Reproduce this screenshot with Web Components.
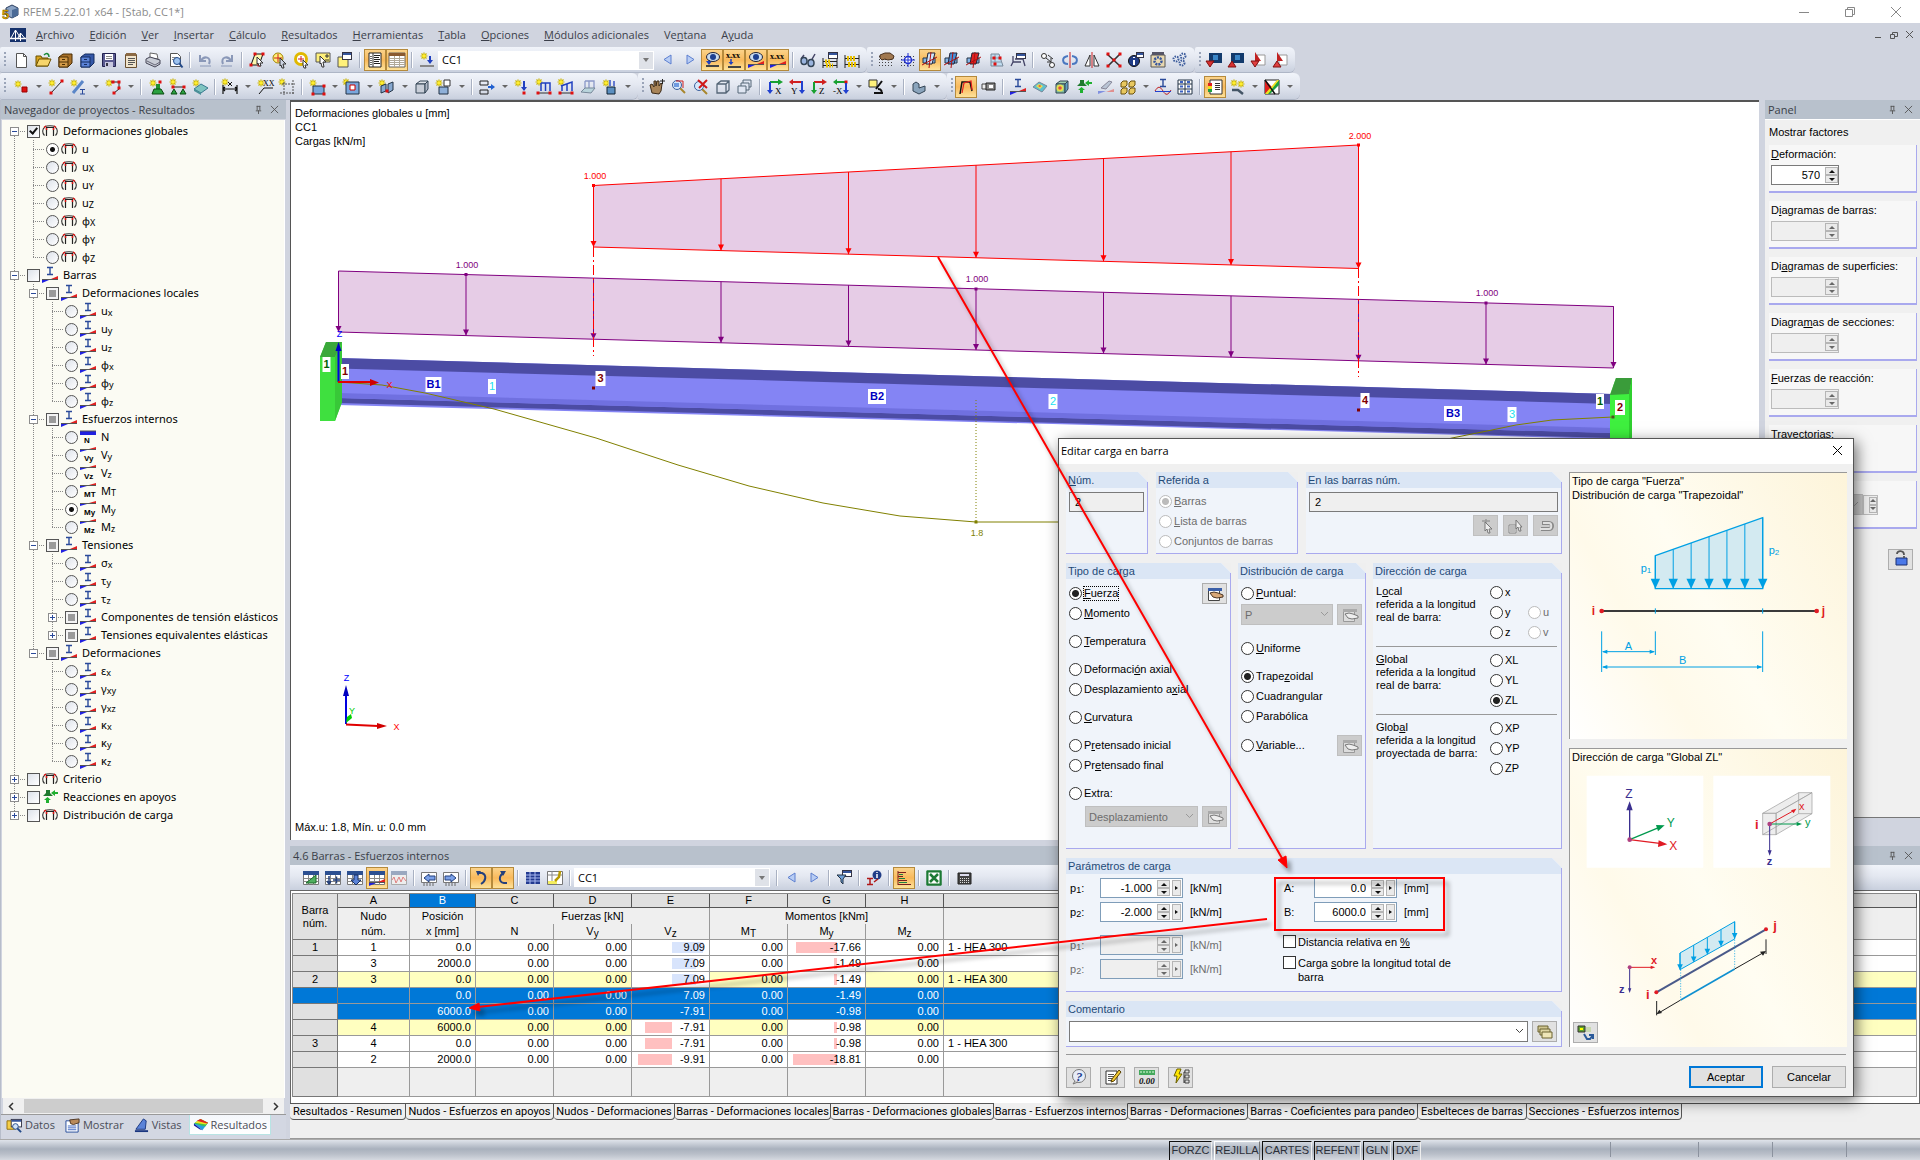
<!DOCTYPE html>
<html lang="es">
<head>
<meta charset="utf-8">
<title>RFEM 5.22.01 x64 - [Stab, CC1*]</title>
<style>
html,body{margin:0;height:100%;overflow:hidden}
body{font:11px/14px "Liberation Sans",Arial,sans-serif;color:#000;background:#d0d4df}
</style>
</head>
<body>
<rf-app></rf-app>
<script>
/* ---------- icon drawings, 16 x 16 grid ---------- */
const star=(x,y)=>`<path d="M${x} ${y-3.5}v7M${x-3.5} ${y}h7M${x-2.5} ${y-2.5}l5 5M${x+2.5} ${y-2.5}l-5 5" stroke="#c9b400" stroke-width="1.2"/><circle cx="${x}" cy="${y}" r="1.8" fill="#ffee30"/>`;
const red=(x,y)=>`<rect x="${x-1.5}" y="${y-1.5}" width="3" height="3" fill="#e01010"/>`;
const line=(d,c,w=1)=>`<path d="${d}" fill="none" stroke="${c}" stroke-width="${w}"/>`;
const fill=(d,c,s='none')=>`<path d="${d}" fill="${c}" stroke="${s}"/>`;
const lens=(x,y,r=4.5)=>`<path d="M${x+3} ${y+3}l5 5" stroke="#a8862c" stroke-width="2"/><circle cx="${x}" cy="${y}" r="${r}" fill="#d8e8fa" stroke="#3a5f9c"/>`;
const beamDiag=fill('M0 16v-3h7z','#2020e0')+fill('M16 9v3H9z','#e02020')+line('M0 12.5h16','#555');
const iMark=(x,y)=>line(`M${x-3} ${y+.5}h6M${x} ${y}v7M${x-3} ${y+7.5}h6`,'#2a4a9a',1.4);
const win=(x,y,w,h)=>`<rect x="${x+.5}" y="${y+.5}" width="${w}" height="${h}" fill="#fff" stroke="#334"/><rect x="${x+1}" y="${y+1}" width="${w-1}" height="2" fill="#35559c"/>`;
const cube=(c1,c2,c3)=>fill('M2 5l4-3h8l-3 3z',c1,'#345')+fill('M2 5h9v9H2z',c2,'#345')+fill('M11 5l3-3v8l-3 4z',c3,'#345');
const grid=line('M1.5 4v11M4.5 4v11M7.5 4v11M10.5 4v11M13.5 4v11','#444').replace('/>',' stroke-dasharray="1 2"/>');
const sheet=`<path d="M.5 1.5h15v13H.5z" fill="#fff" stroke="#777"/><path d="M0 1h16v4H0z" fill="#2b4f91"/><path d="M.5 8.5h15M.5 11.5h15M5.5 5v10M10.5 5v10" stroke="#888"/>`;
const hand=fill('M2 3l5-2h5l4 3-1 3-5 1-3-1-3 1-2-2z','#a07850','#4b3320');
const axisPlanes=(c)=>fill('M1 6h12v5H1z','#86b6e8','#234')+fill('M6 1h7l-3 11H4z',c,'#223')+line('M0 13l15-8M9 0L7 16','#b01010');
const cubeSm=(x,y)=>fill(`M${x} ${y+2}l2-2h4v4l-2 2h-4z`,'#e8c860','#6b5210');
const ICONS={
 app:fill('M4 4l6-3 6 3v7l-6 3-6-3z','#8aa3c4','#2b3f60')+fill('M10 6l6-2v7l-6 3z','#4a6a96')+`<text x="0" y="15" font-size="13" font-weight="bold" fill="#f0b400" stroke="#5a4200" stroke-width=".5" font-family="Liberation Sans,sans-serif">5</text>`,
 bridge:`<rect y="1" width="16" height="14" fill="#15316b"/>`+line('M0 11.5h16','#fff',1.5)+line('M5.5 3v11M5.500 3L1 11M5.500 3l5 8M10.500 6v8M10.500 6L8 11M10.500 6l4 5','#fff'),
 'new':fill('M3.5 1.5h7l3 3v11h-10z','#fff','#555')+line('M10.5 1.5v3h3','#555'),
 open:fill('M1 14V4h5l1 2h6v8z','#d9a520','#6b5000')+fill('M1 14l3-7h12l-3 7z','#f7d56b','#6b5000')+line('M9 3c3-3 5-1 5 2','#1a8a3a',1.5),
 box:fill('M2 5l4-3h9v9l-4 4H2z','#a8712a','#4b2e05')+fill('M2 5h9v10H2z','#d29a48','#4b2e05')+line('M2 10h9M5 7.5h3M5 12.5h3','#4b2e05'),
 boxb:fill('M2 5l4-3h9v9l-4 4H2z','#3558a8','#152c60')+fill('M2 5h9v10H2z','#5b83d8','#152c60')+line('M2 10h9M5 7.5h3M5 12.5h3','#152c60'),
 save:fill('M1.5 1.5h13v13h-13z','#5a5a90','#222250')+fill('M4 2h8v6H4z','#fff')+fill('M4 10h8v5H4z','#c8c8e0')+line('M5 4.5h6M5 6.500h6','#888')+fill('M5 11h2v3H5z','#334'),
 clip:fill('M2.5 2.5h11v13h-11z','#f0e4cc','#6b5030')+line('M5 6.5h7M5 8.5h7M5 10.5h7M5 12.5h5','#555')+fill('M3 1h10v3H3z','#8c6a45'),
 print:fill('M5 1l7 1 1 5-8-1z','#fff','#666')+fill('M1 7l4-2 10 3v4l-5 3-9-4z','#c9cdd6','#445')+line('M2 9l8 4 5-3','#667'),
 preview:fill('M3.5 1.5h7l3 3v10h-10z','#fff','#555')+line('M5 5.5h5M5 7.5h3','#888')+`<circle cx="10" cy="9" r="3.5" fill="#9ec3ef" stroke="#234a8a"/><path d="M12.500 11.500l3 4" stroke="#234a8a" stroke-width="2"/>`,
 undo:line('M3 3v6h6M4 9c3-6 11-4 8 3','#8a98b8',2)+line('M3 14h11','#8a98b8'),
 redo:line('M13 3v6H7M12 9C9 3 1 5 4 12','#8a98b8',2)+line('M2 14h11','#8a98b8'),
 plane:fill('M6 2h8l-4 11H2z','#fff9b0','#111')+red(6,2)+red(2,13)+red(14,2)+red(10,13)+fill('M8 5l6 6h-3l1 3-2 0-1-3-1 1z','#fff','#333'),
 zoomy:`<circle cx="7" cy="6" r="5" fill="#fff27a" stroke="#a08000"/>`+line('M7 2v8M3 6h8','#d02020')+fill('M9 6l6 6-3 0 1 4-2 0-1-3-1 1z','#ccd4e4','#333'),
 zoomr:`<circle cx="8" cy="7" r="5.5" fill="#fff" stroke="#e0b800" stroke-width="3"/>`+line('M5 7h6M8 4v6','#d02020')+fill('M10 8l5 5-3 0 1 3-2 0-1-3z','#fff','#333'),
 selpm:fill('M1 1h14v9H1z','#fff17a','#555')+line('M10 4h4M12 2v4M10 8h4','#333')+fill('M5 4l6 6-3 0 1 5-2 0-1-4-1 1z','#fff','#333'),
 win:fill('M1 5h10v10H1z','#fff17a','#555')+win(5,0,9,7),
 list:fill('M2 1h12v14H2z','#fff','#222')+line('M6 1v14','#333')+line('M3 4.500h2M3 6.500h2M3 8.500h2M3 10.500h2M3 12.500h2','#666')+line('M7 3.500h6M7 5.500h5M7 7.500h6M7 9.500h5M7 11.500h6','#222'),
 tbl:fill('M0 1h16v14H0z','#fff','#666')+fill('M0 1h16v3H0z','#8a5a30')+line('M0 6.500h16M0 8.500h16M0 10.500h16M0 12.500h16M5.500 4v11M10.500 4v11','#b0a898'),
 ldnew:star(5,4)+line('M11 4v6','#2040c0',2)+fill('M8 8h6l-3 4z','#2040c0')+fill('M1 13h14v2H1z','#888'),
 prev:fill('M11 3v9L4 7.500z','#b8cdf4','#5c7fd0'),
 next:fill('M5 3v9l7-4.500z','#b8cdf4','#5c7fd0'),
 eyeload:line('M5 4v7','#2040c0',2)+fill('M2 9h6l-3 4z','#2040c0')+`<ellipse cx="9" cy="5" rx="6.500" ry="4.500" fill="#cde" stroke="#223"/><circle cx="9" cy="5" r="3" fill="#1d3f90"/>`+fill('M2 13h13v2H2z','#444'),
 xxxload:`<text x="0" y="6" font-size="8" font-weight="bold" font-family="Liberation Serif,serif">x.xx</text>`+line('M5 7v5','#2040c0',1.5)+fill('M2.500 10h5l-2.500 3z','#2040c0')+fill('M2 14h13v2H2z','#444'),
 eyebeam:`<ellipse cx="8" cy="5" rx="6.500" ry="4.500" fill="#cde" stroke="#223"/><circle cx="8" cy="5" r="3" fill="#1d3f90"/>`+beamDiag,
 xxxbeam:`<text x="0" y="7" font-size="8" font-weight="bold" font-family="Liberation Serif,serif">x.xx</text>`+beamDiag,
 glasses:line('M1 7l3-4M11 9l4-7','#446',1.5)+`<ellipse cx="4" cy="9" rx="3" ry="3.500" fill="#9ab4dd" stroke="#345" stroke-width="1.500"/><ellipse cx="11" cy="11" rx="3" ry="3.500" fill="#9ab4dd" stroke="#345" stroke-width="1.500"/>`,
 calcwin:win(6,0,9,6)+line('M1 6v10M15 7v9M1 9.500h14M1 13.500h14','#222')+line('M3 9.500h5M4 13.500h7','#e8c000',4).replace('/>',' stroke-dasharray="2 1"/>'),
 abacus:line('M1 3v13M15 3v13M1 6.500h14M1 12.500h14','#222')+line('M3 6.500h9M4 12.500h8','#e8c000',5).replace('/>',' stroke-dasharray="2 1"/>'),
 handgrid:grid+hand,
 gridsnap:grid+`<circle cx="8" cy="8" r="3.500" fill="#fff" stroke="#2030d0" stroke-width="1.500"/>`+line('M8 1v14M1 8h14','#2030d0'),
 ax1:axisPlanes('#cfe4fa'),ax2:axisPlanes('#4a90d8'),ax3:axisPlanes('#e02020'),
 gridsurf:fill('M3 2h8l4 12H3z','#c0dcf0','#789')+line('M2 6h11M3 10h11M7 2v12','#89a')+red(6,6)+red(12,6)+red(7,12),
 hook:win(6,1,9,5)+line('M3 4v6l-2 4M5 7h8l2 7M3 10h8','#446',1.3),
 copy:`<circle cx="4" cy="4" r="2.500" fill="#fff" stroke="#333"/><circle cx="12" cy="13" r="2.500" fill="#fff" stroke="#333"/>`+line('M6 6l5 4M11 6v4H7M8 3l5 4','#333'),
 rot:line('M8 0v16','#d02020')+line('M6 4C-1 5 0 12 6 12M10 4c7 1 6 8 0 8','#4a78c0',2),
 mirror:line('M8 0v16','#d02020')+fill('M6 3v11H1z','#fff','#333')+fill('M10 3v11h5z','#fff','#333'),
 cross:line('M1 2l13 12M14 2L2 14','#333',1.6)+red(8,8)+red(2,2)+red(14,2)+red(2,14)+red(14,14),
 info:`<circle cx="6" cy="9" r="5.500" fill="#203c86" stroke="#111"/><path d="M6 5v1M6 8v5" stroke="#fff" stroke-width="2"/>`+win(8,0,7,5),
 gear:fill('M1 3h14v12H1z','#e8d8b0','#555')+fill('M2 0h12v3H2z','#556')+`<circle cx="8" cy="9" r="3.500" fill="none" stroke="#35559c" stroke-width="2.500" stroke-dasharray="2 1"/>`,
 gears:`<g fill="none" stroke="#3c5c9c" stroke-width="2" stroke-dasharray="1.500 1"><circle cx="4" cy="7" r="2.500"/><circle cx="11" cy="4" r="2.500"/><circle cx="10" cy="11" r="2.500"/></g>`,
 dlS:fill('M3 1h13v10H3z','#123a6c')+fill('M7 3h5v5H7z','#3a86c8')+fill('M0 9h8l-4 6z','#d83030','#801010'),
 dlU:fill('M3 1h13v10H3z','#123a6c')+fill('M7 3h5v5H7z','#3a86c8')+fill('M0 15h8l-4-6z','#d83030','#801010'),
 redA:fill('M7 3h8v10H7z','#fff','#999')+fill('M5 0l6 9H5z','#c02020')+fill('M1 9h8l-4 6z','#e04040','#801010'),
 redB:fill('M7 3h8v10H7z','#fff','#999')+fill('M5 0l6 9H5z','#c02020')+fill('M1 15h8l-4-6z','#e04040','#801010'),
 node:star(5,5)+fill('M9 8h5v5H9z','#e01010','#900'),
 line:star(4,4)+line('M3 14L14 2','#222')+red(3,14)+red(14,2),
 beam:star(4,4)+line('M3 14L13 2','#5a86c8',3)+line('M10 10.500h5M12.500 10v5M10 15h5','#2a4a9a'),
 poly:star(4,4)+line('M6 3h8v7l-5 4','#222')+red(8,3)+red(14,3)+red(14,9)+red(9,14),
 support:star(5,4)+fill('M8 5h4v5H8z','#209030')+fill('M4 15l2-5h7l3 5z','#2aa040','#0a4a10')+red(12,3),
 supp2:star(3,3)+line('M2 8h13','#222')+red(3,8)+red(14,8)+fill('M1 15l3-5 3 5zM10 15l3-5 3 5z','#2aa040','#0a4a10'),
 surf:star(4,4)+fill('M2 10l7-5 7 4-7 5z','#7fc4c0','#3a7a90')+fill('M2 10v2l7 4v-2z','#4a9098'),
 dim:star(3,3)+line('M1 6v9M15 6v9M1 10h14M3 8l-2 2 2 2M13 8l2 2-2 2','#111',1.2)+line('M6 3l4 4M10 3l-4 4','#111'),
 coord:star(4,4)+line('M2 15l5-6h9','#111')+`<text x="6" y="7" font-size="8" font-family="Liberation Serif,serif">XX</text>`,
 dimbox:star(3,3)+line('M5 3v13M14 1v15M3 5h13M1 14h15','#555').replace('/>',' stroke-dasharray="2 1"/>'),
 sq:star(4,4)+fill('M4 7h11v8H4z','#7aa7dc','#234')+red(4,15)+red(15,15)+red(15,7),
 sqop:star(2,3)+fill('M2 3h13v12H2z','#7aa7dc','#234')+fill('M6 6h5v5H6z','#fff','#c00'),
 solid:star(3,4)+fill('M2 7l5-2v7l-5 2zM9 5l5-2v8l-5 3z','#86a8d0','#234')+red(8,12),
 cubeg:cube('#e0e4ea','#c8ced8','#b0b8c6'),
 cube2:star(3,4)+fill('M3 8h9v7H3z','#8fb0d8','#234')+fill('M8 1h6v6H8z','#fff','#333'),
 release:line('M1 2h8v4H1zM1 11h8v4H1z','#222')+line('M9 8h5','#2060d0',2)+fill('M12 5l4 3-4 3z','#2060d0'),
 arrowpt:star(4,4)+line('M10 2v9','#2040c0',2)+fill('M7 8h6l-3 4z','#2040c0')+red(10,14),
 ldbeam:star(3,3)+line('M5 4h9v8M9.500 4v8M5 4v8','#2040c0',1.5)+line('M1 14h14','#333')+red(2,14)+red(14,14),
 ldbeam2:star(3,3)+line('M3 7l11-4v9M9 5v7M4 7v5','#2040c0',1.5)+line('M1 14h14','#333')+red(2,14)+red(14,14),
 ldsurf:line('M5 2h9v8M9 2v8M5 2v8','#8a98c8',1.3)+fill('M1 13l4-4h10l-4 5z','#b9d4dc','#789'),
 ldcube:star(4,4)+line('M8 1v6M12 2v5','#2040c0',1.3)+fill('M5 8h8v7H5z','#5b8fc0','#123'),
 handzoom:fill('M3 14L1 6l2-1 2 3V2h2v5l1-5h2v5l2-3 1 1-1 7-2 3z','#a88458','#3b2a18')+line('M11 2h5M13.500 0v5','#222'),
 zoomrect:lens(6,6)+line('M5 2h7v7','#d02020')+fill('M3 4h5v4H3z','#6f9be0'),
 zoomx:lens(6,7)+line('M5 1l9 8M14 1L6 9','#d01818',2),
 box3:line('M2 5l4-3h8v9l-3 3H2zM2 5h9v9M11 5l3-3','#567',1.3),
 boxes:fill('M6 1h8v7H6z','#dfe6f2','#567')+fill('M4 4h8v7H4z','#dfe6f2','#567')+fill('M1 7h8v7H1z','#dfe6f2','#567'),
 vx:line('M3 3h10','#18a030',2)+fill('M11 0l5 3-5 3z','#18a030')+line('M3 3v10','#2040d0',2)+fill('M0 11h6l-3 4z','#2040d0')+`<text x="8" y="15" font-size="9" font-family="Liberation Serif,serif">X</text>`,
 vy:line('M3 3h9','#d02020',2)+fill('M4 0L0 3l4 3z','#d02020')+line('M13 2v11','#2040d0',2)+fill('M10 11h6l-3 4z','#2040d0')+`<text x="2" y="15" font-size="9" font-family="Liberation Serif,serif">Y</text>`,
 vz:line('M3 3h10','#d02020',2)+fill('M11 0l5 3-5 3z','#d02020')+line('M3 3v10','#18a030',2)+fill('M0 11h6l-3 4z','#18a030')+`<text x="8" y="15" font-size="9" font-family="Liberation Serif,serif">Z</text>`,
 vmx:line('M3 3h9','#18a030',2)+fill('M4 0L0 3l4 3z','#18a030')+red(13,3)+line('M13 4v9','#2040d0',2)+fill('M10 11h6l-3 4z','#2040d0')+`<text x="0" y="15" font-size="9" font-family="Liberation Serif,serif">-X</text>`,
 micro:fill('M1 1h8v7H1z','#fff17a','#333')+line('M14 2L8 10M6 14h9M10 10c4 0 4 3 3 4','#111',2),
 solid2:fill('M2 5l3-2 3 2v4l6-2v5l-6 3-6-3z','#8aa4bc','#345'),
 frame:line('M2 15L4 3h8l2 9','#111',1.5)+line('M4 14L6 4l7-2 1 9','#e02020',1.2),
 usb:fill('M2 5h7v5H2z','#eee','#444')+fill('M6 4h9v7H6z','#888','#222')+fill('M9 6h4v3H9z','#fff'),
 ibeam:iMark(8,0)+beamDiag,
 grad:fill('M1 8l6-5 8 4-5 6z','#60c0d0','#789')+fill('M4 7l3-2 4 2-3 3z','#e8e050')+fill('M6 7l2-1 1 1-1 1z','#e04040'),
 gradcube:cube('#a0d0b0','#80c0a0','#60a0c0')+`<circle cx="6" cy="9" r="3.500" fill="#e8e050"/><circle cx="6" cy="9" r="1.800" fill="#e05040"/>`,
 supgreen:fill('M4 1h4v3l3 3H1l3-3z','#1f7a2e')+fill('M16 3h-3V1l-4 3 4 3V5h3zM4 14v-3H2l3.500-3L9 11H7v3z','#20b030'),
 shade:fill('M3 9l8-7 3 1-6 7z','#b8c4d4','#889')+fill('M0 15v-3h8z','#8090e0')+fill('M16 10v3H8z','#e09090'),
 cubes4:cubeSm(1,2)+cubeSm(9,2)+cubeSm(1,9)+cubeSm(9,9),
 iwave:iMark(8,0)+line('M0 12c3-5 5-5 8 0s5 4 8-1','#c02020')+line('M0 12.500h16','#2040d0'),
 tbeam:fill('M1 1h14v14H1z','#fff','#234')+line('M1 5h14M1 10h14M8 1v14','#234')+line('M3 3h3M10 3h3M3 7.500h3M10 7.500h3M3 12.500h3M10 12.500h3','#3a60c0',2),
 legend:fill('M3 1h12v14H3z','#fff','#333')+line('M8 4.500h5M8 6.500h5M8 8.500h5M8 10.500h5','#333')+fill('M1 4h4v3H1z','#e02020')+fill('M1 7h4v3H1z','#f0e020')+fill('M1 10h4v3H1z','#20a040'),
 wand:star(5,4)+star(12,5)+line('M3 11h6l5 4','#456',2.500),
 palette:fill('M1 1h14v14H1z','#fff','#222')+fill('M1 1l7 7-7 7z','#e02020')+fill('M1 15L15 1v5l-9 9z','#20a040')+fill('M1 15L13 1h2L4 15z','#f0e020')+line('M1 1l10 14','#111',1.500),
 tri:sheet+fill('M3 13L13 5v8z','#50b060','#1a6a2a'),
 tplus:sheet+line('M4 6v7M2 11l2 3 2-3M8 10h7M11.500 6.500v7','#24407c',1.500),
 tdown:sheet+fill('M7 5h4v5h3l-5 5-5-5h3z','#5b83d8','#152c60'),
 tbeamd:sheet+beamDiag,
 twave:fill('M.5 1.500h15v13H.5z','#eee','#aaa')+fill('M0 1h16v4H0z','#9aa8c0')+line('M1 10l2-3 2 6 3-6 2 5 2-5 3 4','#e08080'),
 tleft:fill('M.5 2.500h15v10H.5z','#fff','#777')+line('M3 13v3M6 13v3M9 13v3M12 13v3','#666')+fill('M8 4v2h6v4H8v2L3 8z','#7aa0e8','#24407c'),
 tright:fill('M.5 2.500h15v10H.5z','#fff','#777')+line('M3 13v3M6 13v3M9 13v3M12 13v3','#666')+fill('M8 4v2H2v4h6v2l5-4z','#7aa0e8','#24407c'),
 curR:line('M4 3h5c5 2 4 8-1 11','#24407c',2)+fill('M3 1h5L5 6z','#24407c'),
 curL:line('M12 13H9C3 12 4 5 9 3','#24407c',2)+fill('M5 1h6l-3 5z','#24407c'),
 tgrid:fill('M1 2h14v12H1z','#223a90')+line('M1 5h14M1 8h14M1 11h14M5 2v12M10 2v12','#a8b8f0'),
 ttool:fill('M.5 1.500h15v13H.5z','#fff','#777')+line('M.5 5h15M5 1v13','#888')+fill('M1 11h9v3H1z','#f4ee60')+line('M13 1l-1 6-4 4','#b89a00',2.500),
 funnel:win(6,0,9,6)+fill('M1 5h9L7 9v5l-2-2V9z','#6fa0d8','#234'),
 infoI:`<circle cx="11" cy="5" r="4.500" fill="#203c86"/><path d="M11 2v1M11 4v4" stroke="#fff" stroke-width="1.500"/>`+line('M1 8.500h6M4 8v6M1 14.500h6M8 12l4-3','#b01818',1.500),
 bars:line('M2 1v14M2 2.500h8M2 6.500h5M2 10.500h9M2 14.500h13','#7a2020',1)+line('M3 4.500h4M3 8.500h6M3 12.500h8','#208040'),
 excel:fill('M1 1h14v14H1z','#fff','#1d7a34')+line('M1.500 1.500h13v13h-13z','#1d7a34',2)+line('M4 4l8 8M12 4l-8 8','#1d7a34',2.500),
 calc:fill('M2 3h13v11H2z','#444','#222')+fill('M4 4h9v2H4z','#dde')+line('M4 8.500h10M4 10.500h10M4 12.500h10','#ddd').replace('/>',' stroke-dasharray="1 1"/>'),
 arc:line('M4.500 13V4.500h7V13','#222',1.2)+line('M3 4C0 6 0 10 2.500 12.500M13 4c3 2 3 6 .5 8.500M3 3.500c2-1 8-1 10 0','#333',1.1)+line('M2 4.500l2-1.500M14 4.500L12 3M4.500 5v2M11.500 5v2','#e01010',1.5),
 nN:line('M0 4h16','#2020e0',4)+line('M0 2h16','#555'),
 flat:fill('M0 5V3h7z','#2020e0')+fill('M16 0v2H9z','#e02020')+line('M0 2.500h16','#555'),
 datos:fill('M0 3h9v9H0z','#f5cf48','#94700c')+win(4,1,11,8)+`<circle cx="9" cy="9" r="3" fill="#cfe3fa" stroke="#234a8a"/><path d="M11 11l4 4" stroke="#234a8a" stroke-width="2"/>`,
 mostrar:fill('M1 3h13v12H1z','#fff','#234a9a')+line('M3 8.500h9M3 10.500h9M3 12.500h9','#3b64c0')+fill('M5 2l10-1v4L9 7 6 6z','#b98a5a','#4b3320'),
 vistas:fill('M10 1l3 2-1 9H2z','#5b83d8','#1a3680')+line('M1 14h14','#1a3680',2),
 result:fill('M1 7l7-5 8 4-6 8z','#2aa0e0')+fill('M1 7l7-5 8 4-3 4z','#40c050')+fill('M2 6l6-4 8 4-2 2z','#f0e020')+fill('M4 4l4-2 8 4-1 1z','#e02020')+fill('M1 7l9 7-3-1-6-4z','#1018a0'),
 cursor:line('M4 3h8M8 1v5','#9a9a9a',1.500)+fill('M7 4l7 7-3 0 1 4-2 0-1-4-2 2z','#eee','#777'),
 cursorl:fill('M1 7h7v8H1z','#eee','#888')+line('M2 9h5M2 11h5M2 13h5','#888')+fill('M8 2l6 7-2 0 1 4-2 0-1-4-2 2z','#eee','#777'),
 back:line('M3 11h8c4 0 4-6 0-6H4','#888',4)+line('M2 11h9c3 0 3-6 0-6H5','#e0e0e0',2),
 edit:fill('M1.500 2.500h11v12h-11z','#fff','#444')+fill('M1 2h14v3H1z','#3b5fa8')+fill('M3 7l4-1 4 1 5 2v2l-6 1-4-1z','#d8a878','#4b3320'),
 editg:fill('M1.500 2.500h11v12h-11z','#ddd','#999')+fill('M1 2h14v3H1z','#aaa')+fill('M3 7l4-1 4 1 5 2v2l-6 1-4-1z','#eee','#777'),
 stack:fill('M1 2h10v6H1z','#cfc590','#6b6230')+fill('M3 5h10v6H3z','#dfd6a4','#6b6230')+fill('M5 8h10v6H5z','#efe6b8','#6b6230'),
 help:`<circle cx="8" cy="7" r="6.500" fill="#e6ecf8" stroke="#777"/><path d="M4 12l-2 3 5-2" fill="#ddd" stroke="#777"/><text x="5" y="12" font-size="13" font-style="italic" font-weight="bold" fill="#1d3f90" font-family="Liberation Serif,serif">?</text>`,
 note:fill('M1 2h11v13H1z','#fff','#333')+line('M3 5.500h6M3 7.500h6M3 9.500h4M3 11.500h4','#555')+fill('M14 1l2 2-7 9-3 1 1-3z','#f2c832','#5a4200'),
 units:fill('M0 1h16v5H0z','#44a85c')+line('M2 2v2M5 2v2M8 2v2M11 2v2M14 2v2','#dfd')+`<text x="0" y="15" font-size="9" font-style="italic" font-weight="bold" fill="#111" font-family="Liberation Serif,serif">0.00</text>`,
 bolt:fill('M4 0h4L6 5h3l-6 9 1-7H1z','#ffe600','#6b6000')+line('M11 3v11M11 3h2M11 8h2M11 13h2','#333')+fill('M12 1h4v3h-4zM12 6h4v3h-4zM12 11h4v3h-4z','#ddd','#444'),
 lock:fill('M3 8h11v7H3z','#4a78e8','#1a2f70')+line('M11 8V6M4 4c0-4 7-4 7 1','#555',1.800),
 render:fill('M0 1h7v6H0z','#60a030','#333')+fill('M2 3h3v2H2z','#ff0')+fill('M8 2h5v5H8z','#c8d8b0')+line('M6 9l3 5h3l3-4M11 10h4v4','#2a5a9a',2)
};
/* ---------- helpers ---------- */
const define=(tag,make)=>customElements.define(tag,class extends HTMLElement{
  connectedCallback(){ if(this.shadowRoot)return;
    const t=document.createElement('template'); t.innerHTML=make(this);
    this.attachShadow({mode:'open'}).append(t.content.cloneNode(true)); }});
const UI='"Open Sans","Noto Sans",sans-serif';

define('rf-icon',el=>`<style>:host{display:inline-block;width:16px;height:16px;flex:none}svg{display:block;width:100%;height:100%;overflow:visible}</style>
<svg viewBox="0 0 16 16" aria-hidden="true">${ICONS[el.getAttribute('name')]||''}</svg>`);

/* a strip of tool buttons; items: name, name* (pressed), name> (with drop arrow), | (divider), = (combo) */
define('rf-tools',el=>{
  const items=el.getAttribute('items').split(' ').map(s=>{
    if(s==='|')return '<i class="sep"></i>';
    if(s[0]==='=')return `<rf-combo style="width:${s.slice(1)}px"></rf-combo>`;
    const on=s.endsWith('*'),dd=s.endsWith('>'),n=s.replace(/[*>]$/,'');
    return `<button class="${on?'on':''}" aria-label="${n}"><rf-icon name="${n}"></rf-icon></button>`+(dd?`<button class="dd" aria-label="${n} opciones"></button>`:'');
  }).join('');
  return `<style>
:host{display:flex;align-items:center;padding:1px 4px 0 10px;background:linear-gradient(#f1f4fa,#e4e8f1 45%,#c9d0de);border-radius:2px 6px 6px 2px;position:relative;box-sizing:border-box;box-shadow:0 1px 0 #aeb6c6}
:host(:not([nogrip]))::before{content:"";position:absolute;left:4px;top:5px;width:2px;height:16px;background:repeating-linear-gradient(#9aa4b8 0 2px,transparent 2px 4px)}
button{width:22px;height:22px;padding:0;border:0;background:none;display:flex;align-items:center;justify-content:center;flex:none;box-sizing:border-box}
.on{border:1px solid #b58a3c;background:linear-gradient(#fbd38a,#f9b95b 50%,#fde29a)}
.dd{width:13px}.dd::after{content:"";border:3px solid transparent;border-top-color:#666;border-bottom:0}
.sep{width:8px;height:16px;flex:none;background:linear-gradient(90deg,#a9b1c2 0 1px,#fff 1px 2px) 3px 0/2px 100% no-repeat}
</style>${items}`;});

define('rf-combo',()=>`<style>
:host{display:flex;position:relative;height:19px;margin-right:3px;background:#fff;flex:none}
select{appearance:none;border:0;background:#fff;width:100%;height:19px;padding:0 4px;font:11px/18px ${UI};color:#000}
i{position:absolute;right:1px;top:1px;width:14px;height:17px;background:#dfe2e8;display:flex;align-items:center;justify-content:center;pointer-events:none}
i::after{content:"";border:3px solid transparent;border-top:4px solid #777;border-bottom:0}
</style><select aria-label="Caso de carga"><option>CC1</option></select><i></i>`);

define('rf-dockhead',()=>`<style>
:host{display:flex;align-items:center;height:19px;padding:0 7px 0 3px;background:#b8c1cc;color:#3a3f48;font:11px/18px ${UI};box-sizing:border-box;flex:none}
span{flex:1;white-space:nowrap}svg{width:9px;height:9px;margin-left:7px}
</style><span><slot></slot></span>
<svg viewBox="0 0 10 10" fill="none" stroke="#555"><path d="M3 1.500h4M3.500 1v5M6.500 1v5M2 6.500h6M5 6v4"/></svg>
<svg viewBox="0 0 10 10" fill="none" stroke="#555"><path d="M1 1l8 8M9 1l-8 8"/></svg>`);

define('rf-spin',el=>{const d=el.hasAttribute('disabled')?'disabled':'';return `<style>
:host{display:inline-flex;width:68px;height:20px;box-sizing:border-box;border:1px solid #7a7a7a;background:#fff;flex:none}
:host([more]){width:83px;border-color:#7f9db9}
:host([disabled]){background:#efefef}
:host([disabled]:not([more])){border-color:#bbb}
input{flex:1;min-width:0;border:0;padding:0 5px 0 0;background:none;font:11px/16px "Liberation Sans",Arial,sans-serif;text-align:right;color:#000}
.ud{display:flex;flex-direction:column;width:13px;padding:1px 0}
button{flex:1;border:1px solid #b5b5b5;background:#eaeaea;padding:0;display:flex;align-items:center;justify-content:center;min-height:0}
.m{flex:none;width:9px;margin:1px 1px 1px 2px}
b{border:3px solid transparent;border-top-width:0;border-bottom-color:#111}.ud button+button b{transform:rotate(180deg)}
.m b{border:2px solid transparent;border-right:0;border-left:3px solid #111}
:host([disabled]) b{opacity:.6}
</style><input ${d} aria-label="${el.getAttribute('label')||'valor'}" value="${el.getAttribute('value')||''}"><span class="ud"><button ${d} aria-label="más"><b></b></button><button ${d} aria-label="menos"><b></b></button></span>${el.hasAttribute('more')?`<button class="m" ${d} aria-label="opciones"><b></b></button>`:''}`;});

define('rf-select',el=>`<style>
:host{display:flex;position:relative;height:21px;flex:none}
select{appearance:none;width:100%;border:1px solid #bfbfbf;background:#cccccc;color:#6d6d6d;font:11px "Liberation Sans",Arial,sans-serif;padding:0 3px;border-radius:0;opacity:1}
:host([open]) select{background:#fff;border-color:#7a7a7a}
svg{position:absolute;right:4px;top:7px;width:9px;height:6px;pointer-events:none}
</style><select aria-label="${el.getAttribute('label')||''}" ${el.hasAttribute('open')?'':'disabled'}><option>${el.getAttribute('value')||''}</option></select><svg viewBox="0 0 9 6"><path d="M1 1l3.500 3.500L8 1" fill="none" stroke="${el.hasAttribute('open')?'#444':'#999'}"/></svg>`);

/* ---------- window frame ---------- */
define('rf-titlebar',()=>`<style>
:host{display:flex;align-items:center;height:23px;background:#fff;padding:0 18px 0 2px;color:#8b8b8b;font:11px/20px ${UI}}
span{flex:1;margin-left:5px}svg{width:12px;height:12px;margin-left:34px;fill:none;stroke:#888}
</style><rf-icon name="app"></rf-icon><span>RFEM 5.22.01 x64 - [Stab, CC1*]</span>
<svg viewBox="0 0 12 12"><path d="M1 6.500h10"/></svg><svg viewBox="0 0 12 12"><path d="M1.500 3.500h7v7h-7zM3.500 3V1.500h7v7H9"/></svg><svg viewBox="0 0 12 12"><path d="M1 1l10 10M11 1L1 11"/></svg>`);

define('rf-menubar',()=>`<style>
:host{display:flex;align-items:center;height:24px;background:#d0d4df;padding:0 5px 0 10px;font:11px/24px ${UI};color:#3b3f4a}
nav{display:flex;gap:15px;flex:1;margin-left:10px}a{color:inherit;text-decoration:none}
svg{width:10px;height:10px;margin-left:6px;fill:none;stroke:#555}
</style><rf-icon name="bridge"></rf-icon><nav>${['<u>A</u>rchivo','<u>E</u>dición','<u>V</u>er','<u>I</u>nsertar','<u>C</u>álculo','<u>R</u>esultados','<u>H</u>erramientas','<u>T</u>abla','<u>O</u>pciones','<u>M</u>ódulos adicionales','Ve<u>n</u>tana','A<u>y</u>uda'].map(t=>`<a href="#">${t}</a>`).join('')}</nav>
<svg viewBox="0 0 10 10"><path d="M2 7.500h6"/></svg><svg viewBox="0 0 10 10"><path d="M1.500 4.500h4v4h-4zM3.500 4V2.500h5v4H6"/></svg><svg viewBox="0 0 10 10"><path d="M1 1l7 7M8 1L1 8"/></svg>`);

/* ---------- project navigator ---------- */
const M=(l,s)=>`${l}<sub>${s}</sub>`;
const leaf=(t,i='ibeam',on)=>({t,i,k:'radio',on});
const TREE=[
 {t:'Deformaciones globales',i:'arc',k:'check',on:1,c:[leaf('u','arc',1),...['uX','uY','uZ','φX','φY','φZ'].map(s=>leaf(M(s[0],s[1]),'arc'))]},
 {t:'Barras',i:'ibeam',k:'check',c:[
  {t:'Deformaciones locales',i:'ibeam',k:'mixed',c:['ux','uy','uz','φx','φy','φz'].map(s=>leaf(M(s[0],s[1])))},
  {t:'Esfuerzos internos',i:'ibeam',k:'mixed',c:[leaf('N','!N'),...['Vy','Vz','MT','My','Mz'].map(s=>leaf(M(s[0],s[1]),'!'+s,s==='My'))]},
  {t:'Tensiones',i:'ibeam',k:'mixed',c:[...['σx','τy','τz'].map(s=>leaf(M(s[0],s[1]))),{t:'Componentes de tensión elásticos',i:'ibeam',k:'mixed',shut:1},{t:'Tensiones equivalentes elásticas',i:'ibeam',k:'mixed',shut:1}]},
  {t:'Deformaciones',i:'ibeam',k:'mixed',c:['εx','γxy','γxz','κx','κy','κz'].map(s=>leaf(M(s[0],s.slice(1))))}]},
 {t:'Criterio',i:'arc',k:'check',shut:1},{t:'Reacciones en apoyos',i:'supgreen',k:'check',shut:1},{t:'Distribución de carga',i:'arc',k:'check',shut:1}];
function treeRows(nodes,guides,grp){
  return nodes.map((n,ix)=>{
    const last=ix===nodes.length-1, g=guides.map(v=>`<i class="g ${v?'v':''}"></i>`).join('');
    const box=n.c||n.shut?`<button class="ex" aria-label="${n.shut?'Expandir':'Contraer'}"><svg viewBox="0 0 9 9"><rect x=".5" y=".5" width="8" height="8" fill="#fff" stroke="#8d8d8d"/><path d="M2 4.500h5${n.shut?'M4.500 2v5':''}" stroke="#2a4a9a"/></svg></button>`:'';
    const ctl=n.k==='radio'?`<input type="radio" name="t${grp}" ${n.on?'checked':''}>`:`<input type="checkbox" class="${n.k}" ${n.on?'checked':''}>`;
    const ic=n.i[0]==='!'?`<span class="ic"><rf-icon name="${n.i==='!N'?'nN':'flat'}"></rf-icon><small>${n.i.slice(1)}</small></span>`:`<rf-icon name="${n.i}"></rf-icon>`;
    return `<li>${g}<i class="g ${last?'h':'v'} ${!guides.length&&!ix?'first':''}"><em></em>${box}</i><label>${ctl}${ic}<span class="t">${n.t}</span></label></li>`+(n.c?treeRows(n.c,[...guides,!last],grp+ix):'');
  }).join('');
}
define('rf-navigator',()=>`<style>
:host{display:flex;flex-direction:column;min-height:0;border-left:1px solid #b7bdca;box-sizing:border-box;font:11px/18px "Noto Sans","Open Sans",sans-serif}
ul{list-style:none;margin:1px 1px 0 1px;padding:2px 0 0 3px;flex:1;background:#fbfbf3;overflow:hidden;border-right:1px solid #fff}
li{display:flex;height:18px;white-space:nowrap}
.g{width:19px;height:18px;position:relative;flex:none}
.v{background:repeating-linear-gradient(#888 0 1px,transparent 1px 2px) 9px 0/1px 100% no-repeat}
.h{background:repeating-linear-gradient(#888 0 1px,transparent 1px 2px) 9px 0/1px 10px no-repeat}
.first{background-position:9px 10px}
em{position:absolute;left:9px;top:9px;width:12px;height:1px;background:repeating-linear-gradient(90deg,#888 0 1px,transparent 1px 2px)}
.ex{position:absolute;left:5px;top:5px;width:9px;height:9px;border:0;padding:0;background:none}.ex svg{display:block;width:9px;height:9px}
label{display:flex;align-items:center;padding-left:3px}
input{appearance:none;width:13px;height:13px;margin:0 2px 0 0;border:1px solid #555;background:linear-gradient(135deg,#dde2ea,#fff);box-sizing:border-box;position:relative;flex:none}
input[type=radio]{border-radius:50%}
input[type=radio]:checked{background:radial-gradient(circle,#111 0 2px,#fff 3px)}
input.mixed{background:#9a9a9a;box-shadow:inset 0 0 0 2px #f4f4f4}
input.check:checked::after{content:"";position:absolute;left:3px;top:0;width:3px;height:6px;border:solid #111;border-width:0 2px 2px 0;transform:rotate(40deg)}
.t{margin-left:5px}sub{font-size:9px;vertical-align:-1px;line-height:0}
.ic{display:grid;width:16px;height:16px;position:relative}.ic small{position:absolute;left:4px;top:6px;font:bold 8px/11px "Liberation Sans",sans-serif}
.sb{display:flex;height:16px;background:#f0f0f0;margin:0 2px 0 2px;align-items:center;justify-content:space-between;padding:0 5px}
.sb i{flex:1;height:14px;background:#cdcdcd;margin:0 9px}
.sb svg{width:7px;height:9px;fill:none;stroke:#333;stroke-width:1.500}
nav{display:flex;height:24px;border-top:1px solid #999;background:#d3d7e2;padding-left:3px;color:#4a4d57;font:11px/18px ${UI};align-items:flex-start}
nav button{display:flex;align-items:center;gap:3px;height:20px;border:0;background:none;font:inherit;color:inherit;padding:0 3px;margin-right:4px}
nav rf-icon{width:15px;height:15px}
nav .on{background:linear-gradient(#f4f7fb,#fff);border:1px solid #b8e4e4;border-top:0}
</style><rf-dockhead>Navegador de proyectos - Resultados</rf-dockhead>
<ul>${treeRows(TREE,[],'r')}</ul>
<div class="sb"><svg viewBox="0 0 7 9"><path d="M5 1L1.500 4.500 5 8"/></svg><i></i><svg viewBox="0 0 7 9"><path d="M2 1l3.500 3.500L2 8"/></svg></div>
<nav><button><rf-icon name="datos"></rf-icon>Datos</button><button><rf-icon name="mostrar"></rf-icon>Mostrar</button><button><rf-icon name="vistas"></rf-icon>Vistas</button><button class="on"><rf-icon name="result"></rf-icon>Resultados</button></nav>`);

/* ---------- model view ---------- */
function modelDrawing(){
  const lerp=(a,b,t)=>a+(b-a)*t; let s='';
  const load=(x0,x1,t0,t1,b0,b1,n,c)=>{
    let o=`<path d="M${x0} ${t0}L${x1} ${t1}V${b1}L${x0} ${b0}z" fill="#e6cce6" stroke="${c}"/>`;
    for(let i=0;i<=n;i++){const k=i/n,x=lerp(x0,x1,k),b=lerp(b0,b1,k);o+=`<path d="M${x} ${lerp(t0,t1,k)}V${b}" stroke="${c}"/><path d="M${x-3} ${b-6}h6l-3 6z" fill="${c}"/>`;}
    return o;};
  s+=load(338.5,1613.5,271,306.500,332,368,10,'#800080')+load(593.5,1358.5,185.500,145,247,268.500,6,'#ff0000');
  for(const [x,y] of [[466,274.500],[976,289],[1486,303]])s+=`<rect x="${x-1.5}" y="${y-1.5}" width="3" height="3" fill="#800080"/>`;
  s+=`<rect x="592" y="184" width="3" height="3" fill="#f00"/><rect x="1357" y="143.500" width="3" height="3" fill="#f00"/>`;
  s+=`<g stroke="#f00" stroke-dasharray="10 3 2 3"><path d="M593.500 247V356M1358.500 268V377"/></g>`;
  s+=`<path d="M338 358L1612 394V439L338 405z" fill="#8484f4"/><path d="M338 358L1612 394V404L338 368.500z" fill="#4c4ca4"/><path d="M338 398L1612 433V438L338 403z" fill="#4c4ca4"/><path d="M338 393L1612 428V433L338 398z" fill="#7070e0"/>`;
  s+=`<path d="M326 342h16v60l-7 19h-15v-64z" fill="#3fe03f"/><path d="M326 342h16l-7 15h-15z" fill="#3aa83a"/><path d="M335 357l7-15v60l-7 19z" fill="#38c838"/>`;
  s+=`<path d="M1616 378h16v62h-22v-45z" fill="#3ff03f"/><path d="M1616 378h16l-3 16-19 1z" fill="#3a9c3a"/><path d="M1632 378v62h-3v-46z" fill="#2fd02f"/>`;
  s+=`<polyline points="338,382 382,385 425,393 494,409 596,438 678,465 749,486 823,503 900,516 976,522 1058,522" fill="none" stroke="#808000"/><polyline points="1440,441 1452,438 1487,431 1516,425 1552,420 1613,417" fill="none" stroke="#808000"/><rect x="974.500" y="520.500" width="3" height="3" fill="#808000"/><rect x="1611.500" y="415.500" width="3" height="3" fill="#505020"/><path d="M976 400V522" stroke="#808000" stroke-dasharray="1 2"/>`;
  s+=`<path d="M338.500 382V350" stroke="#0000e0" stroke-width="2"/><path d="M335.500 351h6l-3-9z" fill="#0000c0"/><path d="M338 382h33" stroke="#e00000" stroke-width="2"/><path d="M370 379v7l9-3.500z" fill="#d00000"/>`;
  const t=(x,y,v,c,z=9)=>`<text x="${x}" y="${y}" fill="${c}" font-size="${z}" text-anchor="middle">${v}</text>`;
  s+=t(595,179,'1.000','#f00')+t(1360,139,'2.000','#f00')+t(467,268,'1.000','#800080')+t(977,282,'1.000','#800080')+t(1487,296,'1.000','#800080')+t(977,536,'1.8','#808000')+t(339.500,337,'Z','#00f')+t(389.500,388,'X','#f00');
  const tag=(x,y,v,c,w=8,b=1)=>`<rect x="${x-w/2}" y="${y-7}" width="${w}" height="15" fill="#fff"/><text x="${x}" y="${y+4}" fill="${c}" font-size="11" text-anchor="middle" ${b?'font-weight="bold"':''}>${v}</text>`;
  s+=`<g fill="#800000"><rect x="592" y="386.500" width="3" height="3"/><rect x="1357" y="408.500" width="3" height="3"/></g>`;
  s+=tag(326.500,364,'1','#006000')+tag(345,371,'1','#800000')+tag(433.500,384,'B1','#0000c0',16)+tag(492,386,'1','#20e0f0',8,0)+tag(600.500,378,'3','#800000',10)+tag(877,396,'B2','#0000c0',18)+tag(1053,401,'2','#20e0f0',9,0)+tag(1365,400,'4','#800000',9)+tag(1453,413,'B3','#0000c0',18)+tag(1512,414,'3','#20e0f0',9,0)+tag(1600,401,'1','#006000')+tag(1620,407,'2','#800000',10);
  s+=`<path d="M346 724V695" stroke="#0000e0" stroke-width="2"/><path d="M343 696h6l-3-11z" fill="#0000c0"/><path d="M346 724.500L378 726" stroke="#e00000" stroke-width="2"/><path d="M377 723v6l10-3z" fill="#d00000"/><path d="M346 723l1-6 4-3 1 4z" fill="#00d000"/>`+t(346.500,681,'Z','#00f')+t(396.500,730,'X','#f00')+t(352,714,'Y','#0c0');
  return s;
}
define('rf-view',()=>`<style>
:host{display:flex;flex-direction:column;justify-content:space-between;background:#fff;border:solid #555;border-width:2px 0 0 1px;position:relative;overflow:hidden;box-sizing:border-box;font:11px/14px "Liberation Sans",Arial,sans-serif}
p{margin:4px 4px 6px;z-index:1}svg{position:absolute;inset:0;width:100%;height:100%}
</style><svg font-family="Liberation Sans,Arial,sans-serif"><g transform="translate(-291,-102)">${modelDrawing()}</g></svg>
<p>Deformaciones globales u [mm]<br>CC1<br>Cargas [kN/m]</p><p>Máx.u: 1.8, Mín. u: 0.0 mm</p>`);

/* ---------- factor panel ---------- */
define('rf-panel',()=>`<style>
:host{display:flex;flex-direction:column;width:155px;box-sizing:border-box;font:11px/14px "Liberation Sans",Arial,sans-serif}
.b{flex:1;background:#f0f0f0;border-top:1px solid #fff;border-bottom:1px solid #777;padding:4px 3px 0 4px;display:flex;flex-direction:column}
h3{font:inherit;margin:0 0 5px;line-height:16px}
section{background:#f7f7f7;border:solid #a9a9ee;border-width:0 1px 2px 0;height:45px;padding:1px 2px 0;display:flex;flex-direction:column;gap:3px;margin-bottom:8px}
label{white-space:nowrap;line-height:16px}.l{flex-direction:row;justify-content:flex-end;align-items:center;gap:0;padding-right:38px}
.l rf-select{width:46px}.l rf-spin{width:15px}
button{align-self:flex-end;width:25px;height:21px;margin:12px 4px 0 0;padding:0;border:1px solid #adadad;background:#e1e1e1}
</style><rf-dockhead>Panel</rf-dockhead><div class="b"><h3>Mostrar factores</h3>
<section><label><u>D</u>eformación:</label><rf-spin value="570" label="Deformación"></rf-spin></section>
${['D<u>i</u>agramas de barras:','Di<u>a</u>gramas de superficies:','Diagra<u>m</u>as de secciones:','<u>F</u>uerzas de reacción:'].map(t=>`<section><label>${t}</label><rf-spin disabled></rf-spin></section>`).join('')}
<section><label><u>T</u>rayectorias:</label></section><section class="l"><rf-select></rf-select><rf-spin disabled></rf-spin></section>
<button aria-label="Bloquear"><rf-icon name="lock"></rf-icon></button></div>`);

/* ---------- result table ---------- */
const ROWS=[['1','1','0.0',9.09,-17.66,1,''],['','3','2000.0',7.09,-1.49,0,''],['2','3','0.0',7.09,-1.49,1,'y'],['','','0.0',7.09,-1.49,0,'s all'],['','','6000.0',-7.91,-0.98,0,'s'],['','4','6000.0',-7.91,-0.98,0,'y'],['3','4','0.0',-7.91,-0.98,1,''],['','2','2000.0',-9.91,-18.81,0,'']];
function bar(v,max,full,zero,sel){ if(sel)return ''; const w=Math.max(3,Math.round(Math.abs(v)/max*full)),c=v<0?'#ffc0c0':'#d8e4fc';
  return `style="background:linear-gradient(${c},${c}) ${v<0?zero-w:zero}px 2px/${w}px 11px no-repeat"`;}
define('rf-table',()=>`<style>
:host{display:flex;flex-direction:column;min-height:0;box-sizing:border-box;border:solid #666;border-width:1px 1px 0 1px;padding:2px 2px 0 1px;background:#fff;overflow:hidden;font:11px/15px "Liberation Sans",Arial,sans-serif}
table{border-collapse:separate;border-spacing:0;table-layout:fixed;width:100%;border-top:1px solid #888;border-left:1px solid #888}
th,td{padding:0;font-weight:normal;box-sizing:border-box;border:solid #999;border-width:0 1px 1px 0;height:16px;overflow:hidden;white-space:nowrap;line-height:15px}
th{background:#efefef;text-align:center}
.l th{height:14px;line-height:13px;background:#e0e0e0;border-color:#555}.l .s{background:#0078d7;color:#fff}
.l .c{background:#e0e0e0;line-height:13px;border-color:#777}
.nb th{border-bottom:0}
tbody th{background:#e0e0e0;border-color:#777}
td{text-align:right;padding-right:4px}td.c{text-align:center;padding:0}td.x{text-align:left;padding-left:4px}
.y td{background-color:#ffffc0}.s td,.all th{background:#0078d7;color:#fff}
.f td{background:#efefef;height:29px}.f th{height:29px}
sub{font-size:10px;vertical-align:-2px;line-height:0}
</style><table>
<colgroup><col style="width:45px"><col style="width:72px"><col style="width:66px"><col style="width:78px"><col style="width:78px"><col style="width:78px"><col style="width:78px"><col style="width:78px"><col style="width:78px"><col></colgroup>
<thead><tr class="l"><th rowspan="3" class="c">Barra<br>núm.</th><th>A</th><th class="s">B</th><th>C</th><th>D</th><th>E</th><th>F</th><th>G</th><th>H</th><th></th></tr>
<tr class="nb"><th>Nudo</th><th>Posición</th><th colspan="3">Fuerzas [kN]</th><th colspan="3">Momentos [kNm]</th><th></th></tr>
<tr><th>núm.</th><th>x [mm]</th><th>N</th><th>V<sub>y</sub></th><th>V<sub>z</sub></th><th>M<sub>T</sub></th><th>M<sub>y</sub></th><th>M<sub>z</sub></th><th></th></tr></thead>
<tbody>${ROWS.map(r=>{const s=r[6][0]==='s';return `<tr class="${r[6]}"><th>${r[0]}</th><td class="c">${r[1]}</td><td>${r[2]}</td><td>0.00</td><td>0.00</td><td ${bar(r[3],9.91,34,40,s)}>${r[3].toFixed(2)}</td><td>0.00</td><td ${bar(r[4],18.81,44,49,s)}>${r[4].toFixed(2)}</td><td>0.00</td><td class="x">${r[5]?'1 - HEA 300':''}</td></tr>`}).join('')}
<tr class="f"><th></th>${'<td></td>'.repeat(9)}</tr></tbody></table>`);

const TABS=[['Resultados - Resumen',116],['Nudos - Esfuerzos en apoyos',148],['Nudos - Deformaciones',121],['Barras - Deformaciones locales',156],['Barras - Deformaciones globales',163],['Barras - Esfuerzos internos',134],['Barras - Deformaciones',120],['Barras - Coeficientes para pandeo',170],['Esbelteces de barras',109],['Secciones - Esfuerzos internos',155]];
define('rf-sheets',()=>`<style>
:host{display:flex;height:36px;background:#efefef;position:relative;flex:none;border-bottom:1px solid #999;box-sizing:border-box}
:host::before{content:"";position:absolute;left:0;right:0;top:0;height:1px;background:#555}
button{height:17px;box-sizing:border-box;border:1px solid #555;border-left:0;background:#efefef;font:11px/15px Roboto,"Liberation Sans",sans-serif;padding:0;white-space:nowrap;border-radius:0 0 4px 4px;text-align:center}
.on{border-top-color:#efefef;position:relative}
</style>${TABS.map(([t,w],i)=>`<button class="${i===5?'on':''}" style="width:${w}px">${t}</button>`).join('')}`);

define('rf-results',()=>`<style>
:host{display:flex;flex-direction:column;background:#efefef}
rf-tools{height:25px;border-radius:0;padding-top:0;box-shadow:none}rf-table{height:213px}
</style><rf-dockhead>4.6 Barras - Esfuerzos internos</rf-dockhead>
<rf-tools nogrip items="tri tplus tdown tbeamd* twave | tleft tright | curR* curL* | tgrid ttool | =196 | prev next | funnel | infoI | bars* | excel | calc"></rf-tools>
<rf-table></rf-table><rf-sheets></rf-sheets>`);

define('rf-status',()=>`<style>
:host{display:flex;height:21px;background:linear-gradient(#dfe3ea,#a9b1bd 45%,#b9bfc9 70%,#d5d9e0);padding-left:1169px;box-sizing:border-box;align-items:stretch;font:11px/17px "Liberation Sans",Arial,sans-serif;color:#2b2f38;gap:2px;border-top:1px solid #aaa}
span{border:1px solid #111;border-right-color:#eee;border-bottom:0;margin-top:1px;text-align:center;box-sizing:border-box}
.up{border-color:#fff #777 #777 #fff}i{border-left:1px solid #8b929e;margin:2px 0 3px}
</style><span style="width:43px">FORZC</span><span class="up" style="width:46px">REJILLA</span><span style="width:50px">CARTES</span><span style="width:47px">REFENT</span><span style="width:28px">GLN</span><span style="width:28px">DXF</span><i style="margin-left:187px"></i><i style="margin-left:85px"></i><i style="margin-left:71px"></i><i style="margin-left:71px"></i>`);

/* ---------- load dialog ---------- */
define('rf-group',()=>`<style>
:host{display:flex;flex-direction:column;box-sizing:border-box;background:linear-gradient(225deg,#efefef 7px,#f0f4fa 7px);border-bottom:1px solid #a9a9ee;position:relative}
:host::after{content:"";position:absolute;right:0;top:10px;bottom:0;width:1px;background:#a9a9ee}
header{height:16px;line-height:16px;padding-left:2px;background:#dbe6f5;color:#1f4a78;clip-path:polygon(0 0,calc(100% - 10px) 0,100% 10px,100% 100%,0 100%);flex:none}
div{flex:1;padding:4px 4px 4px 3px;display:flex;flex-direction:column}
</style><header><slot name="h"></slot></header><div><slot></slot></div>`);

const opt=(name,t,o='')=>`<label class="o ${/gap/.test(o)?'gap':''} ${/dis/.test(o)?'dis':''}"><input type="radio" name="${name}" ${/on/.test(o)?'checked':''} ${/dis/.test(o)?'disabled':''}><span class="${/foc/.test(o)?'foc':''}">${t}</span></label>`;
const btn=(i,l,c='')=>`<button class="ib ${c}" aria-label="${l}"><rf-icon name="${i}"></rf-icon></button>`;
const arrow=(x,y,c,s=1)=>`<path d="M${x-14*s} ${y-30*s}h${28*s}l${-14*s} ${30*s}z" fill="${c}"/>`;
function fig1(){const c='#00a0e4';let s='';
  for(let i=0;i<=6;i++){const x=312+i*53.700,y=376-i*19;s+=`<path d="M${x} ${y}V475" stroke="${c}" stroke-width="3"/>`+arrow(x,475,c);}
  return `<svg viewBox="56 128 834 798" font-family="Liberation Sans,Arial,sans-serif"><path d="M312 376L634 262V475H312z" fill="#d3eaf1" stroke="${c}" stroke-width="4"/>${s}
<path d="M151 542H796" stroke="#3a3a3a" stroke-width="6"/><circle cx="151" cy="542" r="7" fill="#e01b24"/><circle cx="796" cy="542" r="7" fill="#e01b24"/>
<g stroke="${c}" stroke-width="3"><path d="M312 534v16M634 534v16M151 603V725M312 603v71M634 603V725M155 664H308M155 710H630"/></g>
<g fill="${c}"><path d="M152 664l16-6v12zM311 664l-16-6v12zM152 710l16-6v12zM633 710l-16-6v12z"/><g font-size="33"><text x="220" y="658">A</text><text x="383" y="702">B</text><text x="268" y="425">p<tspan font-size="24" dy="4">1</tspan></text><text x="652" y="371">p<tspan font-size="24" dy="4">2</tspan></text></g></g>
<g fill="#e01b24" font-weight="bold" font-size="36"><text x="121" y="555">i</text><text x="811" y="553">j</text></g></svg>`;}
function fig2(){const c='#00a0e4';let s='';
  for(let i=0;i<=4;i++){const x=386+i*41,y=668-i*23.500;s+=`<path d="M${x} ${y}v46" stroke="${c}" stroke-width="3"/>`+arrow(x,y+52,c,.6);}
  return `<svg viewBox="56 56 834 894" font-family="Liberation Sans,Arial,sans-serif"><path d="M106 136H456V412H106zM486 136H837V412H486z" fill="#fff"/>
<g stroke-width="4" fill="none"><path d="M235 328V230" stroke="#3a2f8f"/><path d="M235 328L322 292" stroke="#00994d"/><path d="M235 328L325 339" stroke="#e01b24"/></g>
<path d="M225 240l10-27 9 27z" fill="#3a2f8f"/><path d="M314 284l26 1-20 18z" fill="#00994d"/><path d="M322 330l26 12-28 8z" fill="#e01b24"/><circle cx="235" cy="328" r="7" fill="#b04080"/>
<g font-size="36"><text x="222" y="204" fill="#3a2f8f">Z</text><text x="346" y="290" fill="#00994d">Y</text><text x="354" y="359" fill="#e01b24">X</text></g>
<g fill="#e6e6e6" fill-opacity=".7" stroke="#999" stroke-width="2"><path d="M634 249L742 187H782L674 249z"/><path d="M674 249L782 187V250L674 313z"/><path d="M634 249h40v64h-40z"/><path d="M742 187v63h40M742 250L634 313" fill="none"/></g>
<g stroke-width="3"><path d="M655 281L725 242" stroke="#e01b24"/><path d="M655 281H738" stroke="#00994d"/><path d="M655 281V362" stroke="#3a2f8f"/></g><path d="M735 235l-8 14-8-9z" fill="#e01b24"/><path d="M752 281l-16-6v12z" fill="#00994d"/><path d="M655 376l-6-16h12z" fill="#3a2f8f"/><circle cx="655" cy="281" r="7" fill="#b04080"/>
<g font-size="33"><text x="743" y="238" fill="#e01b24">x</text><text x="761" y="288" fill="#00994d">y</text><text x="646" y="405" fill="#3a2f8f" font-weight="bold">z</text><text x="611" y="296" fill="#e01b24" font-weight="bold" font-size="39">i</text></g>
<path d="M386 668L550 574V626L386 718z" fill="#d3eaf1" stroke="${c}" stroke-width="3"/>${s}
<path d="M315 786L644 597" stroke="#4a5a8a" stroke-width="6"/><circle cx="315" cy="786" r="6" fill="#e01b24"/><circle cx="644" cy="597" r="6" fill="#e01b24"/>
<path d="M388 718V806M550 628V716" stroke="${c}" stroke-width="2" stroke-dasharray="4 4"/><path d="M388 809L550 716" stroke="#1090d0" stroke-width="5"/>
<path d="M322 848L388 809M550 716L636 667M316 812V855M644 627V671" stroke="#222" stroke-width="3"/><path d="M315 852l9-14 8 10zM644 662l-18 2 9 12z" fill="#222"/>
<path d="M235 711H300" stroke="#e01b24" stroke-width="3"/><path d="M235 711V776" stroke="#3a2f8f" stroke-width="3"/><path d="M312 711l-14-5v10z" fill="#e01b24"/><path d="M235 788l-5-14h10z" fill="#3a2f8f"/><circle cx="235" cy="711" r="6" fill="#b04080"/>
<g font-weight="bold"><text x="299" y="702" font-size="33" fill="#e01b24">x</text><text x="203" y="788" font-size="33" fill="#3a2f8f">z</text><text x="284" y="807" font-size="39" fill="#e01b24">i</text><text x="666" y="598" font-size="39" fill="#e01b24">j</text></g></svg>`;}
const par=(l,v,u,dis)=>`<div class="pr ${dis?'dis':''}"><span class="pl">${l}</span><rf-spin more ${dis?'disabled':''} value="${v}" label="${l.replace(/<[^>]+>/g,'')}"></rf-spin><span>${u}</span></div>`;
define('rf-dialog',()=>`<style>
:host{display:block;box-sizing:border-box;width:796px;background:#f0f0f0;border:1px solid #555;box-shadow:3px 4px 14px rgba(0,0,0,.55);font:11px/13px "Liberation Sans",Arial,sans-serif}
.tb{height:25px;background:#fff;display:flex;align-items:center;justify-content:space-between;padding:0 10px 0 2px;font:11px/22px ${UI};box-sizing:border-box;padding-bottom:2px}
.tb svg{width:11px;height:11px;stroke:#000;fill:none}
.m{display:flex;gap:7px;padding:8px 6px 7px 7px}.L{flex:1;display:flex;flex-direction:column;gap:9px}.R{width:278px;display:flex;flex-direction:column;gap:9px}
.r{display:flex;gap:8px}.r.n{gap:7px}
.pic{background:linear-gradient(240deg,#fdf4da,#fffdf2 50%,#fffaea 70%,#fff);border:solid #999;border-width:1px 0 0 1px;position:relative;box-sizing:border-box;line-height:14px}
.pic p{margin:1px 2px;position:relative}.pic svg{position:absolute;inset:0;width:278px;height:266px}.pic.b svg{height:298px}
.pic button{position:absolute;left:3px;bottom:4px}
input[type=text]{height:20px;box-sizing:border-box;border:1px solid #7a7a7a;background:#efefef;font:11px "Liberation Sans",Arial,sans-serif;padding:0 5px;width:100%}
.ib{width:25px;height:21px;padding:0;border:1px solid #adadad;background:#e1e1e1;display:flex;align-items:center;justify-content:center;flex:none}
.d{background:#cccccc;border-color:#bfbfbf}
.o{display:flex;align-items:center;height:19px;margin-bottom:1px;white-space:nowrap}.gap{margin-top:8px}
.o input{appearance:none;width:13px;height:13px;border:1px solid #333;border-radius:50%;background:#fff;margin:0 2px 0 0;flex:none;box-sizing:border-box}
.o input:checked{background:radial-gradient(circle,#222 0 3px,#fff 4px)}.dis{color:#6d6d6d}.o.dis input{border-color:#bbb}.o.dis input:checked{background:radial-gradient(circle,#bbb 0 3px,#fff 4px)}
.foc{outline:1px dotted #000}
.sp{display:flex;justify-content:space-between;align-items:flex-start;height:21px}.sp .o{margin-top:1px}
.cmb{display:flex;gap:4px;height:21px}.blk{display:flex;height:60px;margin:0 1px 8px 0;position:relative}.blk>div:first-child{width:114px;white-space:nowrap;margin-top:2px}
.blk .rr{display:grid;grid-template-columns:38px auto;align-content:start}.blk.ln::after{content:"";position:absolute;left:0;right:0;bottom:-4px;height:1px;background:#999}
.pp{display:flex;gap:16px}.pp>div:first-child{width:198px}.pr{display:flex;align-items:center;height:20px;margin-bottom:4px;gap:7px}.pl{width:23px;padding-left:1px}.pr sub{font-size:9px;vertical-align:-1px;line-height:0}
.k{display:flex;gap:2px;align-items:flex-start;line-height:14px}.k input{appearance:none;width:13px;height:13px;box-sizing:border-box;border:1px solid #333;background:#fff;margin:0;flex:none}
.ft{display:flex;border-top:1px solid #999;margin:0 7px;padding:11px 0 8px;gap:9px;align-items:center}.ft i{flex:1}
.tx{width:74px;height:22px;border:1px solid #adadad;background:#e1e1e1;font:11px "Liberation Sans",Arial,sans-serif;box-sizing:border-box}.pri{border:2px solid #0078d7}
</style>
<div class="tb"><span>Editar carga en barra</span><svg viewBox="0 0 11 11"><path d="M1 1l9 9M10 1l-9 9"/></svg></div>
<div class="m"><div class="L">
<div class="r" style="height:82px"><rf-group style="width:82px"><span slot="h"><u>N</u>úm.</span><input type="text" value="2" aria-label="Núm."></rf-group>
<rf-group style="width:142px"><span slot="h">Referida a</span>${opt('ref','<u>B</u>arras','on dis')}${opt('ref','<u>L</u>ista de barras','dis')}${opt('ref','Con<u>j</u>untos de barras','dis')}</rf-group>
<rf-group style="flex:1"><span slot="h">En las barras núm.</span><input type="text" value="2" aria-label="En las barras núm."><div style="display:flex;gap:5px;justify-content:flex-end;margin-top:3px">${btn('cursor','Seleccionar','d')}${btn('cursorl','Seleccionar lista','d')}${btn('back','Invertir','d')}</div></rf-group></div>
<div class="r n" style="height:286px"><rf-group style="width:165px"><span slot="h">Tipo de carga</span>
<div class="sp">${opt('tipo','<u>F</u>uerza','on foc')}${btn('edit','Editar')}</div>${opt('tipo','<u>M</u>omento')}${opt('tipo','<u>T</u>emperatura','gap')}${opt('tipo','Deformaci<u>ó</u>n axial','gap')}${opt('tipo','Desplazamiento a<u>x</u>ial')}${opt('tipo','<u>C</u>urvatura','gap')}${opt('tipo','P<u>r</u>etensado inicial','gap')}${opt('tipo','Pr<u>e</u>tensado final')}${opt('tipo','Extra:','gap')}
<div class="cmb" style="padding-left:16px;margin-top:2px"><rf-select style="width:113px" value="Desplazamiento" label="Extra"></rf-select>${btn('editg','Editar','d')}</div></rf-group>
<rf-group style="width:128px"><span slot="h">Distribución de carga</span><div class="sp">${opt('dis','<u>P</u>untual:')}</div><div class="cmb"><rf-select style="width:92px" value="P" label="Puntual"></rf-select>${btn('editg','Editar','d')}</div>
<div style="height:6px"></div>${opt('dis','<u>U</u>niforme','gap')}${opt('dis','Trape<u>z</u>oidal','on gap')}${opt('dis','Cuadrangular')}${opt('dis','Parabólica')}<div class="sp gap">${opt('dis','<u>V</u>ariable...')}${btn('editg','Editar','d')}</div></rf-group>
<rf-group style="flex:1"><span slot="h">Dirección de carga</span>
<div class="blk ln"><div>L<u>o</u>cal<br>referida a la longitud<br>real de barra:</div><div class="rr">${opt('dir','x')}<i></i>${opt('dir','y')}${opt('dir','u','dis')}${opt('dir','z')}${opt('dir','v','dis')}</div></div>
<div class="blk ln"><div><u>G</u>lobal<br>referida a la longitud<br>real de barra:</div><div class="rr">${opt('dir','XL')}<i></i>${opt('dir','YL')}<i></i>${opt('dir','ZL','on')}</div></div>
<div class="blk"><div>Glob<u>a</u>l<br>referida a la longitud<br>proyectada de barra:</div><div class="rr">${opt('dir','XP')}<i></i>${opt('dir','YP')}<i></i>${opt('dir','ZP')}</div></div></rf-group></div>
<rf-group style="height:134px"><span slot="h">Parámetros de carga</span><div class="pp"><div>${par('p<sub>1</sub>:','-1.000','[kN/m]')}${par('p<sub>2</sub>:','-2.000','[kN/m]')}<div style="height:9px"></div>${par('p<sub>1</sub>:','','[kN/m]',1)}${par('p<sub>2</sub>:','','[kN/m]',1)}</div>
<div>${par('A:','0.0','[mm]')}${par('B:','6000.0','[mm]')}<label class="k" style="margin-top:13px"><input type="checkbox"><span>Distancia relativa en <u>%</u></span></label><label class="k" style="margin-top:7px"><input type="checkbox"><span>Carga <u>s</u>obre la longitud total de<br>barra</span></label></div></div></rf-group>
<rf-group style="height:46px"><span slot="h">Comentario</span><div class="cmb"><rf-select open style="width:459px" label="Comentario"></rf-select>${btn('stack','Comentarios')}</div></rf-group>
</div><div class="R"><div class="pic" style="height:267px">${fig1()}<p>Tipo de carga "Fuerza"<br>Distribución de carga "Trapezoidal"</p></div>
<div class="pic b" style="flex:1">${fig2()}<p>Dirección de carga "Global ZL"</p>${btn('render','Vista')}</div></div></div>
<div class="ft">${btn('help','Ayuda')}${btn('note','Nota')}${btn('units','Unidades')}${btn('bolt','Detalles')}<i></i><button class="tx pri">Aceptar</button><button class="tx">Cancelar</button></div>`);

/* call-out arrows drawn across the windows */
define('rf-callouts',()=>`<style>:host{display:block;pointer-events:none}svg{width:100%;height:100%;display:block}g{filter:drop-shadow(4px 5px 2px rgba(0,0,0,.35))}</style>
<svg><g fill="none" stroke="#f00" stroke-width="2"><path d="M938 257L1283 860M1267 919L478 1007"/><rect x="1275" y="878" width="169" height="52"/><path d="M1287 868l-9-8 8-4zM469 1008l10-5 1 8z" fill="#f00" stroke-width="1"/></g></svg>`);

define('rf-app',()=>`<style>
:host{display:flex;flex-direction:column;height:100vh;background:#d0d4df;position:relative;overflow:hidden}
.tr{display:flex;height:25px}.tr+.tr{margin:1px 0;height:26px}
main{flex:1;display:flex;gap:4px;min-height:0}
rf-navigator{width:286px;flex:none}
.w{flex:1;display:flex;flex-direction:column;min-width:0}
.t{flex:1;display:flex;gap:6px;min-height:0;margin-bottom:6px}rf-view{flex:1}rf-panel{margin-bottom:22px}
rf-dialog{position:absolute;left:1058px;top:438px}rf-callouts{position:absolute;inset:0}
</style><rf-titlebar></rf-titlebar><rf-menubar></rf-menubar>
<div class="tr"><rf-tools items="new open box boxb save clip print preview | undo redo | plane zoomy zoomr selpm win | list* tbl* | ldnew =216 prev next eyeload* xxxload* eyebeam* xxxbeam* | glasses calcwin abacus"></rf-tools><rf-tools style="padding-left:8px" items="handgrid gridsnap ax1* ax2 ax3 gridsurf hook | copy rot mirror cross info gear gears"></rf-tools><rf-tools style="padding-left:8px" items="dlS dlU redA redB"></rf-tools></div>
<div class="tr"><rf-tools items="node> line beam> poly> | support supp2 surf | dim> coord dimbox | sq> sqop> solid> cubeg cube2> | release> arrowpt ldbeam ldbeam2 ldsurf ldcube>"></rf-tools><rf-tools style="padding-left:8px" items="handzoom zoomrect zoomx box3 boxes | vx vy vz vmx> micro> | solid2>"></rf-tools><rf-tools style="padding-left:8px" items="frame* usb | ibeam grad gradcube supgreen shade cubes4> iwave tbeam | legend* wand> palette>"></rf-tools></div>
<main><rf-navigator></rf-navigator><div class="w"><div class="t"><rf-view></rf-view><rf-panel></rf-panel></div><rf-results></rf-results></div></main>
<rf-status></rf-status><rf-dialog></rf-dialog><rf-callouts></rf-callouts>`);
</script>
</body>
</html>
